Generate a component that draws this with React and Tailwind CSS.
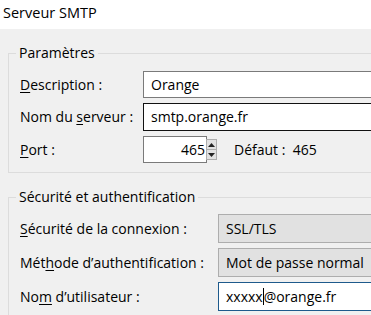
import React from "react";

const font = { fontFamily: '"Open Sans", "Noto Sans", sans-serif' };

function U({ children }) {
  return <span className="underline underline-offset-2 decoration-1">{children}</span>;
}

function Row({ label, labelW, children, mt }) {
  return (
    <div className={`flex items-center ${mt}`}>
      <div className={`${labelW} shrink-0 pl-[11px] whitespace-nowrap`}>{label}</div>
      {children}
    </div>
  );
}

export default function App() {
  return (
    <div
      className="w-[371px] h-[315px] overflow-hidden bg-[#f0f0f0] text-[14px] text-black leading-[20px]"
      style={font}
    >
      <div className="h-[29px] bg-white pl-[3px] pt-[3px] text-[14.5px]">Serveur SMTP</div>

      <div className="pl-[8px] pt-[14px]">
        <fieldset className="w-[420px] border border-[#dcdcdc] pb-[9px]">
          <legend className="ml-[7px] px-[3px] leading-[20px]">Paramètres</legend>
          <div className="pt-[8px]">
            <Row labelW="w-[134px]" label={<><U>D</U>escription :</>} mt="">
              <div className="h-[27px] flex-1 border border-[#7a7a7a] bg-white pl-[7px] flex items-center">
                Orange
              </div>
            </Row>
            <Row labelW="w-[134px]" label={<>Nom du <U>s</U>erveur :</>} mt="mt-[5px]">
              <div className="h-[28px] flex-1 border border-[#111] bg-white pl-[7px] flex items-center">
                smtp.orange.fr
              </div>
            </Row>
            <Row labelW="w-[134px]" label={<><U>P</U>ort :</>} mt="mt-[5px]">
              <div className="h-[27px] w-[64px] border border-[#7a7a7a] bg-white flex items-center justify-end pr-[1px]">
                465
              </div>
              <div className="ml-[-1px] flex flex-col w-[11px] h-[21px] border border-[#adadad] bg-[#e1e1e1]">
                <div className="flex-1 flex items-center justify-center border-b border-[#adadad]">
                  <svg width="7" height="4" viewBox="0 0 7 4"><path d="M0 4 L3.5 0 L7 4Z" fill="#222" /></svg>
                </div>
                <div className="flex-1 flex items-center justify-center">
                  <svg width="7" height="4" viewBox="0 0 7 4"><path d="M0 0 L3.5 4 L7 0Z" fill="#222" /></svg>
                </div>
              </div>
              <div className="ml-[17px] whitespace-nowrap">Défaut :&nbsp;&nbsp;465</div>
            </Row>
          </div>
        </fieldset>

        <fieldset className="mt-[14px] w-[420px] border border-[#dcdcdc] pb-[10px]">
          <legend className="ml-[7px] px-[3px] leading-[20px]">Sécurité et authentification</legend>
          <div className="pt-[7px]">
            <Row labelW="w-[209px]" label={<><U>S</U>écurité de la connexion :</>} mt="">
              <div className="h-[29px] flex-1 border border-[#adadad] bg-[#e1e1e1] pl-[7px] flex items-center">
                SSL/TLS
              </div>
            </Row>
            <Row labelW="w-[209px]" label={<>Mét<U>h</U>ode d’authentification :</>} mt="mt-[5px]">
              <div className="h-[29px] flex-1 border border-[#adadad] bg-[#e1e1e1] pl-[7px] flex items-center">
                Mot de passe normal
              </div>
            </Row>
            <Row labelW="w-[209px]" label={<>No<U>m</U> d’utilisateur :</>} mt="mt-[5px]">
              <div className="h-[29px] flex-1 border border-[#1e5a8c] bg-white pl-[7px] flex items-center">
                <span>xxxxx</span>
                <span className="inline-block w-[1px] h-[17px] bg-black" />
                <span>@orange.fr</span>
              </div>
            </Row>
          </div>
        </fieldset>
      </div>
    </div>
  );
}
